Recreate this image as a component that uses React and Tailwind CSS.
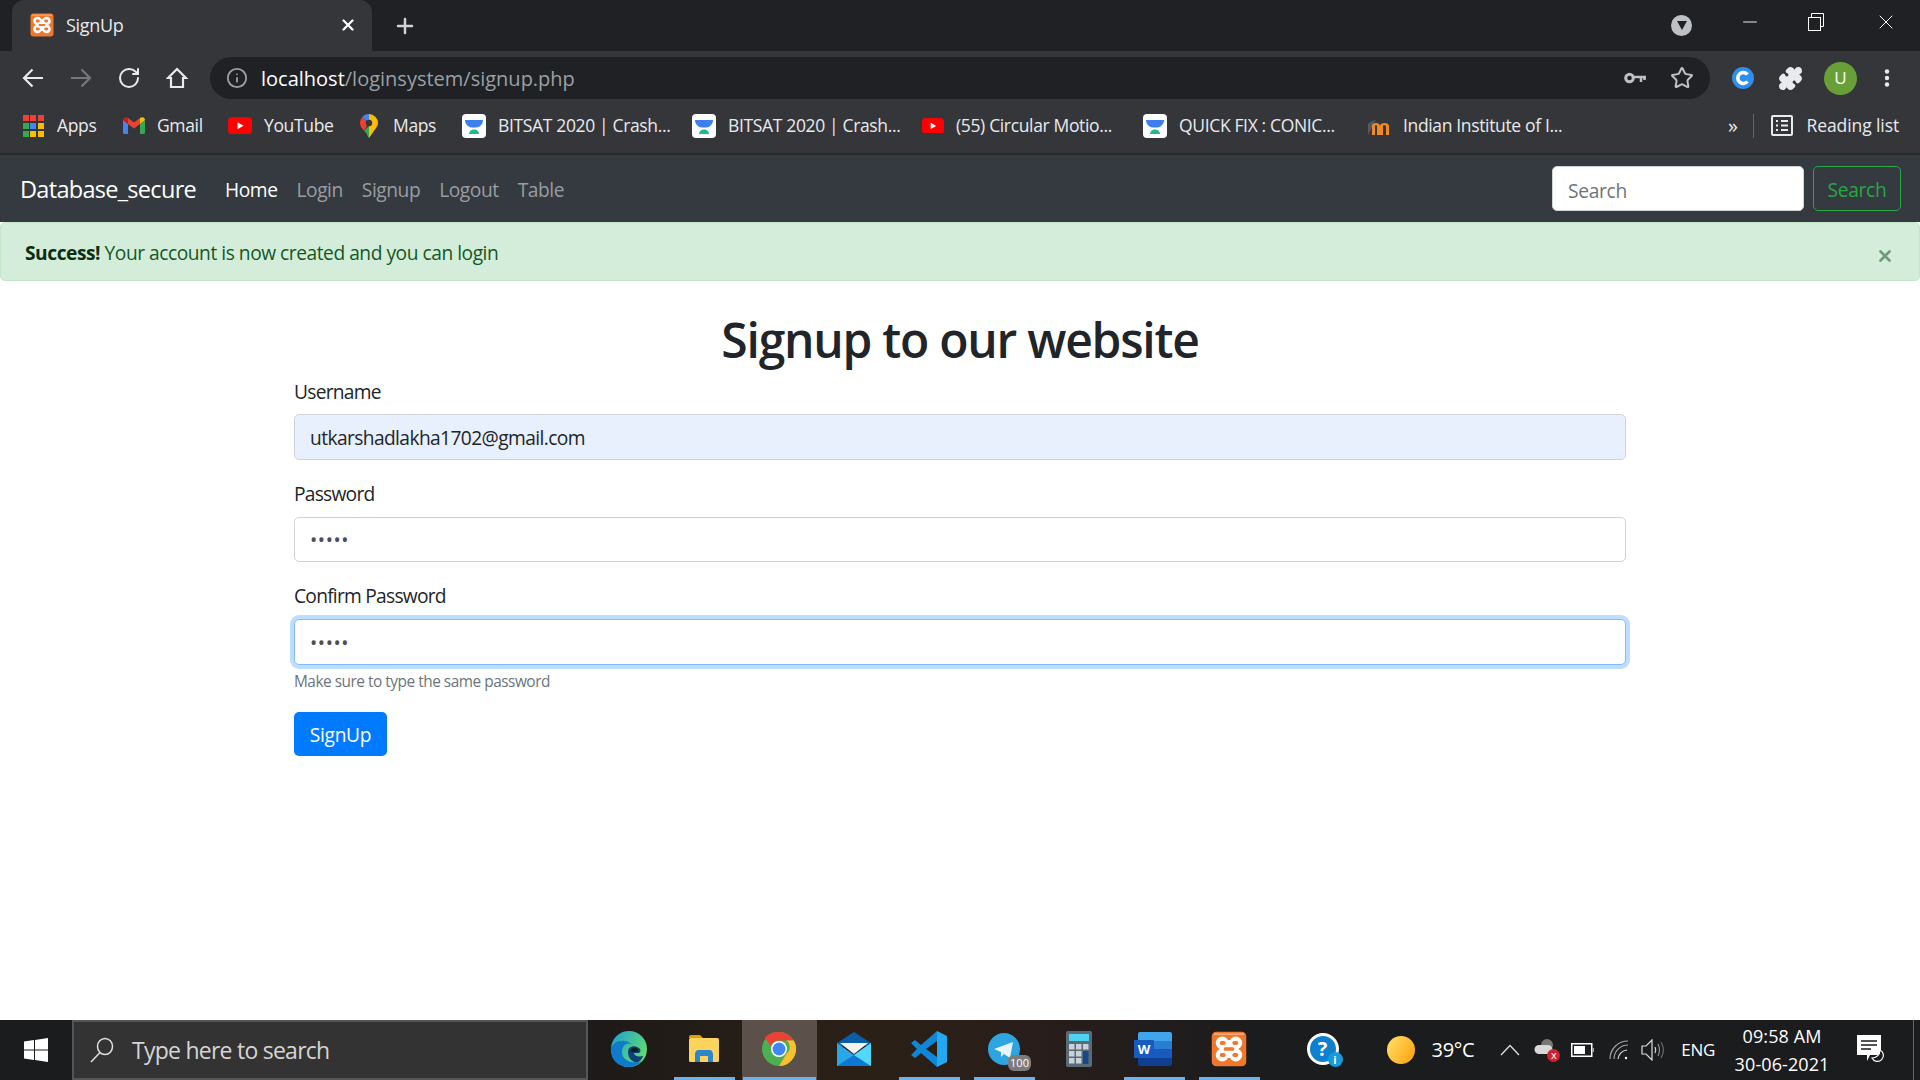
import { RotateCw, Info, Star, Puzzle, X, Plus, Minus } from 'lucide-react'

const Xampp = ({ size = 24 }) => (
  <svg width={size} height={size} viewBox="0 0 24 24">
    <rect x="0.5" y="0.5" width="23" height="23" rx="3" fill="#f0772b" />
    <rect x="2" y="1.600" width="20" height="1" fill="#f8b184" />
    <g fill="#fff">
      <circle cx="7.500" cy="8" r="4.300" /><circle cx="16.500" cy="8" r="4.300" />
      <circle cx="7.500" cy="16" r="4.300" /><circle cx="16.500" cy="16" r="4.300" />
      <rect x="7.500" y="6" width="9" height="12" />
    </g>
    <path d="M10.500 3.500h3L12 5.800zM10.500 20.500h3L12 18.200z" fill="#f0772b" />
    <g fill="#f0772b">
      <rect x="5.800" y="6.600" width="4" height="2.800" rx="1.400" /><rect x="14.200" y="6.600" width="4" height="2.800" rx="1.400" />
      <rect x="5.800" y="14.600" width="4" height="2.800" rx="1.400" /><rect x="14.200" y="14.600" width="4" height="2.800" rx="1.400" />
      <rect x="8.500" y="10.900" width="7" height="2.200" rx="1" />
    </g>
  </svg>
)

const AppsGrid = () => {
  const colors = ['#ea4335', '#ea4335', '#ea4335', '#34a853', '#4285f4', '#fbbc04', '#34a853', '#fbbc04', '#fbbc04']
  return (
    <div className="grid grid-cols-3 gap-[2px] w-5">
      {colors.map((c, i) => <svg key={i} width="6" height="6"><rect width="6" height="6" fill={c} /></svg>)}
    </div>
  )
}

const GmailIcon = () => (
  <svg width="22" height="17" viewBox="0 0 22 17">
    <path d="M0 3v12.500A1.500 1.500 0 0 0 1.500 17H5V7z" fill="#4285f4" />
    <path d="M22 3v12.500a1.500 1.500 0 0 1-1.500 1.500H17V7z" fill="#34a853" />
    <path d="M5 7l6 4.500L17 7V1l-6 4.500L5 1z" fill="#ea4335" />
    <path d="M0 3c0-2.500 3-3.800 5-2v6L0 3z" fill="#c5221f" />
    <path d="M22 3c0-2.500-3-3.800-5-2v6l5-4z" fill="#fbbc04" />
  </svg>
)

const YoutubeIcon = ({ w = 24 }) => (
  <svg width={w} height={w * 0.72} viewBox="0 0 24 17">
    <rect width="24" height="17" rx="4" fill="#ff0000" />
    <path d="M9.500 5v7l6-3.500z" fill="#fff" />
  </svg>
)

const MapsIcon = () => (
  <svg width="18" height="24" viewBox="0 0 18 24">
    <path d="M9 0a9 9 0 0 1 9 9c0 2-1 3.600-2 5l-7 10-2-4 2-6z" fill="#fbbc04" />
    <path d="M9 24c-1-3-3-5-5-7.500L9 12z" fill="#34a853" />
    <path d="M9 0a9 9 0 0 0-7 3.300L9 9z" fill="#4285f4" />
    <path d="M2 3.300A9 9 0 0 0 0 9c0 3 2 5.500 4 7.500L9 9z" fill="#ea4335" />
    <circle cx="9" cy="9" r="3.200" fill="#35363a" />
  </svg>
)

const BitsatIcon = () => (
  <svg width="24" height="24" viewBox="0 0 24 24">
    <rect width="24" height="24" rx="4" fill="#fff" />
    <path d="M3 6h18c0 4-3 7-6.500 7.500h-5C6 13 3 10 3 6z" fill="#3d7ff0" />
    <path d="M7 20c0-2.500 2-4.500 5-4.500s5 2 5 4.500z" fill="#1fb98a" />
  </svg>
)

const MoodleIcon = () => (
  <svg width="24" height="20" viewBox="0 0 24 20">
    <path d="M1 19V9c0-2 4-4 8-5l-2 3z" fill="#58595b" />
    <path d="M5 19V10c0-4 8-4 8 0v9h-3v-9c0-1-2-1-2 0v9z" fill="#f08a24" />
    <path d="M13 19v-9c0-4 9-4 9 0v9h-3v-9c0-1-3-1-3 0v9z" fill="#f08a24" />
  </svg>
)

const ReadingIcon = () => (
  <svg width="22" height="21" viewBox="0 0 22 21" fill="none" stroke="#e8eaed" strokeWidth="2">
    <rect x="1" y="1" width="20" height="19" rx="1" />
    <path d="M5 6h2M5 10.500h2M5 15h2M10 6h7M10 10.500h7M10 15h7" />
  </svg>
)

const CExtIcon = () => (
  <svg width="22" height="22" viewBox="0 0 22 22">
    <circle cx="11" cy="11" r="11" fill="#2f8ff0" />
    <path d="M15.500 7.500a5.500 5.500 0 1 0 0 7" fill="none" stroke="#fff" strokeWidth="3.500" />
  </svg>
)

const Kebab = () => (
  <svg width="6" height="18" viewBox="0 0 6 18" fill="#e8eaed">
    <circle cx="3" cy="2.500" r="2.200" /><circle cx="3" cy="9" r="2.200" /><circle cx="3" cy="15.500" r="2.200" />
  </svg>
)

const BackArrow = ({ className }) => (
  <svg width="22" height="22" viewBox="0 0 22 22" fill="none" stroke="currentColor" strokeWidth="2.200" className={className}>
    <path d="M21 11H2M10.500 2.500L2 11l8.500 8.500" />
  </svg>
)

const ForwardArrow = ({ className }) => (
  <svg width="22" height="22" viewBox="0 0 22 22" fill="none" stroke="currentColor" strokeWidth="2.200" className={className}>
    <path d="M1 11h19M11.500 2.500L20 11l-8.500 8.500" />
  </svg>
)

const HomeGlyph = ({ className }) => (
  <svg width="22" height="22" viewBox="0 0 22 22" fill="none" stroke="currentColor" strokeWidth="2.200" className={className}>
    <path d="M11 2L2 11h3v9h12v-9h3z" />
  </svg>
)

const KeyGlyph = ({ className }) => (
  <svg width="22" height="12" viewBox="0 0 22 12" fill="none" stroke="currentColor" className={className}>
    <circle cx="5.500" cy="6" r="3.800" strokeWidth="3" />
    <path d="M9 5h12v1.500M17 6v4M20.500 6v2" strokeWidth="2.500" />
  </svg>
)

const EdgeIcon = () => (
  <svg width="36" height="36" viewBox="0 0 36 36">
    <defs>
      <linearGradient id="edgeA" x1="0" y1="0" x2="1" y2="0.600"><stop offset="0" stopColor="#1c9fd8" /><stop offset="1" stopColor="#62dc6e" /></linearGradient>
    </defs>
    <circle cx="18" cy="18" r="18" fill="url(#edgeA)" />
    <path d="M0 19C1 9 14 7 21 13c-6-2-10 2-10 8 0 7 8 13 20 9-4 4-8 6-13 6C7 36 0 29 0 19z" fill="#0f7ccb" />
    <path d="M17 21c0-5 5-7 9-5 3 1 5 4 2 6h-5c0 3 4 4 9 3-1 3-2 4-5 6-6 1-10-4-10-10z" fill="#0d3f78" />
    <path d="M19 21c0-3 3-5 6-4 2 1 3 3 1 4z" fill="#1a1c1e" />
  </svg>
)

const ExplorerIcon = () => (
  <svg width="32" height="30" viewBox="0 0 30 30">
    <path d="M0 3a2 2 0 0 1 2-2h9l3 3h-14z" fill="#e0a100" />
    <rect y="4" width="30" height="24" rx="1.500" fill="#fcd35c" />
    <path d="M6 28v-7c0-3 1-5 4-5h10c3 0 4 2 4 5v7h-5v-6h-8v6z" fill="#2c86c9" />
  </svg>
)

const ChromeIcon = () => (
  <svg width="34" height="36" viewBox="0 0 36 36">
    <circle cx="18" cy="18" r="18" fill="#4caf50" />
    <path d="M18 0a18 18 0 0 1 15.600 9H18a9 9 0 0 0-8.500 6L3 6a18 18 0 0 1 15-6z" fill="#ea4335" />
    <path d="M33.600 9A18 18 0 0 1 18 36l8-13a9 9 0 0 0 0-14z" fill="#fbc02d" />
    <circle cx="18" cy="18" r="8.500" fill="#fff" />
    <circle cx="18" cy="18" r="6.800" fill="#4285f4" />
  </svg>
)

const MailIcon = () => (
  <svg width="36" height="34" viewBox="0 0 34 34">
    <path d="M0 11L17 0l17 11v3H0z" fill="#0a5ea8" />
    <path d="M3 11h28L17 22z" fill="#f2f2f2" />
    <path d="M0 11l17 12 17-12v23H0z" fill="#28a8ea" />
    <path d="M0 34l17-11 17 11z" fill="#0f78d4" />
    <path d="M34 11v23L17 23z" fill="#50d9ff" />
  </svg>
)

const VsCodeIcon = () => (
  <svg width="36" height="36" viewBox="0 0 36 36">
    <path d="M26 0L10 14 4 9l-4 3 6 6-6 6 4 3 6-5 16 14z" fill="#0f86d6" />
    <path d="M26 0l10 5v26l-10 5z" fill="#24a8f2" />
    <path d="M26 10l-11 8 11 8z" fill="#2b2016" />
  </svg>
)

const TelegramIcon = () => (
  <div className="relative w-[32px] h-[32px]">
    <svg width="32" height="32" viewBox="0 0 32 32">
      <circle cx="16" cy="16" r="16" fill="#2ca5e0" />
      <path d="M6 16l19-7-3 16-6-4-3 3v-5z" fill="#e8f2f7" />
    </svg>
    <div className="absolute right-[-11px] bottom-[-6px] w-[23px] h-[16px] rounded-[6px] bg-[#7c7c7c] text-white text-[11px] leading-[16px] text-center">100</div>
  </div>
)

const CalcIcon = () => (
  <svg width="28" height="36" viewBox="0 0 26 36">
    <rect width="26" height="36" rx="2" fill="#5b6b76" />
    <rect x="3" y="3" width="20" height="7" fill="#4fd2f0" />
    <g fill="#c9d2d8">
      <rect x="3" y="13" width="5.500" height="5.500" /><rect x="10" y="13" width="5.500" height="5.500" /><rect x="17" y="13" width="5.500" height="5.500" />
      <rect x="3" y="20" width="5.500" height="5.500" /><rect x="10" y="20" width="5.500" height="5.500" />
      <rect x="3" y="27" width="5.500" height="5.500" /><rect x="10" y="27" width="5.500" height="5.500" />
    </g>
    <rect x="17" y="20" width="5.500" height="13" fill="#134a8e" />
  </svg>
)

const WordIcon = () => (
  <div className="relative w-[36px] h-[34px]">
    <div className="absolute left-[2px] top-0 w-[34px] h-[34px] rounded-[2px] overflow-hidden flex flex-col">
      <div className="flex-1 bg-[#41a5ee]" />
      <div className="flex-1 bg-[#2b7cd3]" />
      <div className="flex-1 bg-[#185abd]" />
      <div className="flex-1 bg-[#103f91]" />
    </div>
    <div className="absolute left-[-2px] top-[8px] w-[20px] h-[18px] bg-[#185abd] text-white text-[13px] font-bold leading-[18px] text-center">W</div>
  </div>
)

const HelpIcon = () => (
  <div className="relative w-[36px] h-[34px]">
    <div className="w-[32px] h-[32px] rounded-full bg-[#0f7fd0] border-[3px] border-white text-white font-bold text-[20px] leading-[26px] text-center">?</div>
    <div className="absolute right-0 bottom-0 w-[15px] h-[15px] rounded-full bg-[#1a9ad8] text-white text-[11px] font-bold leading-[15px] text-center">i</div>
  </div>
)

const OneDriveOff = () => (
  <div className="relative w-[26px] h-[24px]">
    <svg width="22" height="16" viewBox="0 0 22 16" className="absolute left-0 top-[1px]">
      <circle cx="13" cy="6" r="6" fill="#777" />
      <path d="M5 15a4.500 4.500 0 0 1 0-9h9a4.500 4.500 0 0 1 0 9z" fill="#d8d8d8" />
    </svg>
    <div className="absolute right-0 bottom-0 w-[13px] h-[13px] rounded-full bg-[#d3202f] text-white text-[11px] leading-[12px] text-center">x</div>
  </div>
)

const BatteryIcon = () => (
  <svg width="23" height="14" viewBox="0 0 23 14">
    <rect x="0.750" y="0.750" width="20" height="12.500" fill="none" stroke="#fff" strokeWidth="1.500" />
    <rect x="3" y="3" width="11" height="8" fill="#fff" />
    <rect x="21.500" y="5" width="1.500" height="4" fill="#aaa" />
  </svg>
)

const WifiIcon = () => (
  <svg width="20" height="20" viewBox="0 0 20 20" fill="none" stroke="#ddd" strokeWidth="1.200">
    <path d="M1 19A18 18 0 0 1 19 1" opacity="0.7" />
    <path d="M5 19A14 14 0 0 1 19 5" opacity="0.7" />
    <path d="M9 19A10 10 0 0 1 18 10" />
    <circle cx="17" cy="18" r="1.200" fill="#fff" stroke="none" />
  </svg>
)

const SpeakerIcon = () => (
  <svg width="24" height="22" viewBox="0 0 24 22" fill="none" stroke="#ddd" strokeWidth="1.200">
    <path d="M1 7h4l6-6v20l-6-6H1z" />
    <path d="M14 8c1 2 1 4 0 6" />
    <path d="M17 5c2 4 2 8 0 12" opacity="0.6" />
    <path d="M20 3c3 5 3 11 0 16" opacity="0.4" />
  </svg>
)

const NotifIcon = () => (
  <div className="relative w-[28px] h-[30px]">
    <svg width="24" height="28" viewBox="0 0 24 28" className="absolute left-0 top-0">
      <path d="M0 0h24v20H13l-3 6v-6H0z" fill="#fff" />
      <path d="M4 6h16M4 10h16M4 14h10" stroke="#1a1c1e" strokeWidth="1.500" />
    </svg>
    <svg width="14" height="14" viewBox="0 0 14 14" className="absolute right-0 bottom-[2px]">
      <path d="M9 1a6 6 0 1 1-8 8c4 0 8-3 8-8z" fill="#1a1c1e" stroke="#fff" strokeWidth="1.200" />
    </svg>
  </div>
)

const bookmarks = [
  { icon: <AppsGrid />, label: 'Apps', cls: 'w-[100px] gap-[14px]' },
  { icon: <GmailIcon />, label: 'Gmail', cls: 'w-[105px] gap-3' },
  { icon: <YoutubeIcon />, label: 'YouTube', cls: 'w-[132px] gap-3' },
  { icon: <MapsIcon />, label: 'Maps', cls: 'w-[102px] gap-[15px]' },
  { icon: <BitsatIcon />, label: 'BITSAT 2020 | Crash...', cls: 'w-[230px] gap-3' },
  { icon: <BitsatIcon />, label: 'BITSAT 2020 | Crash...', cls: 'w-[230px] gap-3' },
  { icon: <YoutubeIcon w={22} />, label: '(55) Circular Motio...', cls: 'w-[221px] gap-3' },
  { icon: <BitsatIcon />, label: 'QUICK FIX : CONIC...', cls: 'w-[224px] gap-3' },
  { icon: <MoodleIcon />, label: 'Indian Institute of I...', cls: 'w-[300px] gap-3' },
]

const taskItems = [
  { icon: <EdgeIcon /> },
  { icon: <ExplorerIcon />, running: true },
  { icon: <ChromeIcon />, running: true, active: true },
  { icon: <MailIcon /> },
  { icon: <VsCodeIcon />, running: true },
  { icon: <TelegramIcon />, running: true },
  { icon: <CalcIcon /> },
  { icon: <WordIcon />, running: true },
  { icon: <Xampp size={36} />, running: true },
]

const navLinks = ['Login', 'Signup', 'Logout', 'Table']

function BrowserChrome() {
  return (
    <div className="bg-[#35363a] text-[#e8eaed]">
      {/* tab strip */}
      <div className="h-[51px] bg-[#202124] flex items-end pl-3">
        <div className="w-[360px] h-[51px] bg-[#35363a] rounded-t-[12px] flex items-center pl-[18px] pr-[15px] pb-[1px]">
          <Xampp />
          <span className="ml-3 text-[18px] tracking-[-0.3px]">SignUp</span>
          <X size={18} strokeWidth={3} className="ml-auto text-white" />
        </div>
        <div className="h-[51px] flex items-center ml-[21px]">
          <Plus size={24} strokeWidth={2.5} className="text-[#d0d2d6]" />
        </div>
        <div className="ml-auto h-[51px] flex items-center">
          <div className="w-[21px] h-[21px] rounded-full bg-[#bdc1c6] flex items-center justify-center mr-[47px]">
            <svg width="10" height="9" viewBox="0 0 10 9"><path d="M0 0h10L5 9z" fill="#202124" /></svg>
          </div>
          <Minus size={22} strokeWidth={1} className="text-white mr-[47px] mb-2" />
          <svg width="16" height="18" viewBox="0 0 16 18" fill="none" stroke="#fff" className="mr-[50px] mb-2">
            <rect x="0.500" y="4.500" width="12" height="13" /><path d="M3.500 4.500V.5h12v13h-3" />
          </svg>
          <X size={24} strokeWidth={1} className="text-white mr-[22px] mb-2" />
        </div>
      </div>

      {/* toolbar */}
      <div className="h-[54px] flex items-center pl-[22px] pr-[30px]">
        <BackArrow className="text-[#e8eaed]" />
        <ForwardArrow className="text-[#75777a] ml-[26px]" />
        <RotateCw size={24} strokeWidth={2} className="text-[#e8eaed] ml-[25px]" />
        <HomeGlyph className="text-[#e8eaed] ml-[25px]" />
        <div className="ml-[22px] w-[1500px] h-[42px] rounded-full bg-[#202124] flex items-center pl-[16px] pr-[16px]">
          <Info size={22} strokeWidth={2} className="text-[#9aa0a6]" />
          <span className="ml-[13px] pt-[1px] text-[20px]">
            <span className="text-white">localhost</span>
            <span className="text-[#9aa0a6]">/loginsystem/signup.php</span>
          </span>
          <KeyGlyph className="ml-auto text-[#bdc1c6] mr-[24px]" />
          <Star size={24} strokeWidth={2} className="text-[#bdc1c6]" />
        </div>
        <div className="ml-[22px]"><CExtIcon /></div>
        <Puzzle size={25} fill="#e8eaed" className="ml-[24px] text-[#e8eaed]" />
        <div className="ml-[21px] w-[33px] h-[33px] rounded-full bg-[#689f38] text-white flex items-center justify-center text-[17px]">U</div>
        <div className="ml-[27px]"><Kebab /></div>
      </div>

      {/* bookmarks bar */}
      <div className="h-[48px] pb-[7px] flex items-center pl-[23px] text-[17.500px] tracking-[-0.35px]">
        {bookmarks.map((b, i) => (
          <div key={i} className={`flex items-center shrink-0 ${b.cls}`}>
            <span className="shrink-0 flex items-center">{b.icon}</span>
            <span className="whitespace-nowrap">{b.label}</span>
          </div>
        ))}
        <span className="ml-[61px] text-[20px]">»</span>
        <div className="ml-[15px] w-px h-[24px] bg-[#5f6368] shrink-0" />
        <div className="ml-[17px]"><ReadingIcon /></div>
        <span className="ml-[14px] whitespace-nowrap tracking-[-0.1px]">Reading list</span>
      </div>
      <div className="h-[2px] bg-[#2a2a2b]" />
    </div>
  )
}

function Navbar() {
  return (
    <nav className="h-[67px] bg-[#343a40] flex items-center pl-[20px] pr-[19px]">
      <a className="text-[23.500px] text-white tracking-[-0.7px] mt-[3px]">Database_secure</a>
      <a className="ml-[29px] text-[19.200px] text-white tracking-[-0.45px] mt-[3px]">Home</a>
      <div className="flex items-center ml-[19px] gap-[19px] text-[19.200px] text-[#9a9da0] tracking-[-0.45px] mt-[3px]">
        {navLinks.map(l => <a key={l}>{l}</a>)}
      </div>
      <input
        placeholder="Search"
        className="ml-auto w-[252px] h-[45px] rounded-[5px] bg-white border border-[#ced4da] px-[15px] pt-[3px] text-[19.200px] tracking-[-0.3px] placeholder:text-[#6c757d] outline-none"
      />
      <button className="ml-[9px] w-[88px] h-[45px] rounded-[5px] border border-[#28a745] pt-[3px] text-[#28a745] text-[19.200px] tracking-[-0.3px]">Search</button>
    </nav>
  )
}

function Alert() {
  return (
    <div className="h-[59px] bg-[#d4edda] border border-[#c3e6cb] rounded-[5px] flex items-center pl-[24px] pr-[25px] text-[#155724] text-[19.200px] tracking-[-0.47px]">
      <p className="mt-[4px]"><strong className="font-bold text-[#0b2e13]">Success!</strong> Your account is now created and you can login</p>
      <X size={18} strokeWidth={3.5} className="ml-auto mt-[8px] text-[#6f9a79]" />
    </div>
  )
}

function SignupForm() {
  return (
    <div className="w-[1332px] mx-auto text-[#212529] text-[19.200px] tracking-[-0.6px]">
      <h1 className="text-center text-[48px] font-semibold leading-[58px] mt-[30px] tracking-[-1.25px]">Signup to our website</h1>
      <label className="block mt-[9px] leading-[28px] tracking-[-0.75px]">Username</label>
      <input
        readOnly
        value="utkarshadlakha1702@gmail.com"
        className="block w-full h-[46px] mt-[8px] rounded-[5px] bg-[#e8f0fe] border border-[#ced4da] px-[15px] outline-none"
      />
      <label className="block mt-[20px] leading-[28px] tracking-[-0.75px]">Password</label>
      <input
        readOnly
        type="password"
        value="12345"
        className="block w-full h-[45px] mt-[9px] rounded-[5px] bg-white border border-[#ced4da] px-[15px] outline-none text-[#495057] tracking-[0.6px]"
      />
      <label className="block mt-[20px] leading-[28px] tracking-[-0.75px]">Confirm Password</label>
      <input
        readOnly
        type="password"
        value="12345"
        className="block w-full h-[46px] mt-[9px] rounded-[5px] bg-white border border-[#80bdff] shadow-[0_0_0_4px_rgba(0,123,255,0.25)] px-[15px] outline-none text-[#495057] tracking-[0.6px]"
      />
      <p className="mt-[7px] text-[15.400px] leading-[20px] text-[#6c757d] tracking-[-0.48px]">Make sure to type the same password</p>
      <button className="block mt-[20px] w-[93px] h-[44px] pt-[2px] rounded-[5px] bg-[#007bff] text-white tracking-[-0.3px]">SignUp</button>
    </div>
  )
}

function Taskbar() {
  return (
    <div className="h-[60px] bg-[#1b1c1e] flex items-stretch text-white shrink-0">
      <div className="w-[72px] flex items-center justify-center">
        <svg width="24" height="24" viewBox="0 0 24 24" fill="#fff">
          <path d="M0 3.500l10-1.400v9.400H0zM11 2L24 0v11.500H11zM0 12.500h10v9.400L0 20.500zM11 12.500h13V24l-13-2z" />
        </svg>
      </div>
      <div className="w-[516px] bg-[#333333] border-2 border-[#555555] flex items-center pl-[16px]">
        <svg width="24" height="26" viewBox="0 0 24 26" fill="none" stroke="#e0e0e0" strokeWidth="1.500">
          <ellipse cx="15" cy="9.500" rx="7.500" ry="8" /><path d="M10 15.500L1 25" />
        </svg>
        <span className="ml-[18px] text-[23px] text-[#d5d5d5] tracking-[-0.75px]">Type here to search</span>
      </div>
      <div className="flex ml-[3.500px] bg-[linear-gradient(90deg,#1e1a19,#2b2016_40%,#2a1e1a_60%,#1b1c1e)]">
        {taskItems.map((t, i) => (
          <div key={i} className={`relative w-[75px] flex items-center justify-center pb-[2px] ${t.active ? 'bg-[#5b514a]' : ''}`}>
            {t.icon}
            {t.running && <div className={`absolute bottom-0 h-[3px] bg-[#6cb2ec] ${t.active ? 'inset-x-[1px]' : 'inset-x-[7px]'}`} />}
          </div>
        ))}
      </div>
      <div className="flex-1 flex items-center relative">
        <div className="ml-[40px]"><HelpIcon /></div>
        <div className="ml-[44px] w-[28px] h-[28px] rounded-full bg-[linear-gradient(120deg,#fde26a,#ff9f0a)] shrink-0" />
        <span className="ml-[17px] text-[20px] tracking-[-0.3px]">39°C</span>
        <svg width="20" height="12" viewBox="0 0 20 12" fill="none" stroke="#e0e0e0" strokeWidth="1.300" className="ml-[26px]">
          <path d="M1 11l9-9.500 9 9.500" />
        </svg>
        <div className="ml-[14px]"><OneDriveOff /></div>
        <div className="ml-[11px]"><BatteryIcon /></div>
        <div className="ml-[15px]"><WifiIcon /></div>
        <div className="ml-[12px]"><SpeakerIcon /></div>
        <span className="ml-[16px] text-[17px] tracking-[-0.3px]">ENG</span>
        <div className="ml-[17px] w-[100px] text-center text-[18px] leading-[28px] tracking-[0.1px] whitespace-nowrap flex flex-col items-center">
          <span>09:58 AM</span>
          <span>30-06-2021</span>
        </div>
        <div className="ml-[25px]"><NotifIcon /></div>
        <div className="absolute right-[6px] top-0 bottom-0 w-[1px] bg-[#666]" />
      </div>
    </div>
  )
}

export default function App() {
  return (
    <div className="h-screen w-full overflow-hidden flex flex-col bg-white font-['Open_Sans',sans-serif]">
      <BrowserChrome />
      <Navbar />
      <Alert />
      <div className="flex-1 min-h-0">
        <SignupForm />
      </div>
      <Taskbar />
    </div>
  )
}
